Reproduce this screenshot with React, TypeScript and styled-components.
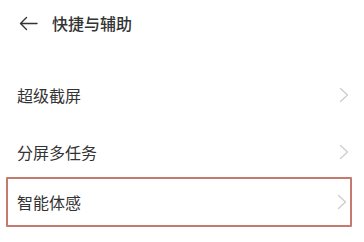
import React from 'react';
import styled, {createGlobalStyle} from "styled-components";

const GlobalStyle = createGlobalStyle`
  html, body {
    margin: 0;
    padding: 0;
    background: #ffffff;
  }
  body {
    font-family: "Noto Sans CJK SC", "Noto Sans", sans-serif;
    color: #333333;
  }
`

type ItemPropsType = {
    title: string
    active?: boolean
}

const Chevron = () => (
    <svg width="10" height="16" viewBox="0 0 10 16" fill="none">
        <path d="M1.5 1.5 L8.5 8 L1.5 14.5" stroke="#cdcdcd" strokeWidth="1.3" strokeLinecap="round" strokeLinejoin="round"/>
    </svg>
)

const Item = (props: ItemPropsType) => {
    return (
        <StyledItem $active={props.active}>
            <ItemText>{props.title}</ItemText>
            <Chevron/>
        </StyledItem>
    );
};

export default function App() {
    return (
        <Page>
            <GlobalStyle/>
            <Header>
                <svg width="19" height="15" viewBox="0 0 19 15" fill="none">
                    <path d="M18 7.5 H1.5 M7.5 1.5 L1.5 7.5 L7.5 13.5" stroke="#333" strokeWidth="1.4" strokeLinecap="round" strokeLinejoin="round"/>
                </svg>
                <Title>快捷与辅助</Title>
            </Header>
            <List>
                <Item title={"超级截屏"}/>
                <Item title={"分屏多任务"}/>
                <Item title={"智能体感"} active/>
            </List>
        </Page>
    );
}

const Page = styled.div`
  width: 364px;
  height: 242px;
  background: #ffffff;
  overflow: hidden;
`
const Header = styled.div`
  height: 46px;
  display: flex;
  align-items: center;
  gap: 14px;
  padding-left: 19px;
`
const Title = styled.h1`
  margin: 0;
  font-size: 16px;
  font-weight: 500;
  color: #333333;
`
const List = styled.div`
  display: flex;
  flex-direction: column;
  padding-top: 20px;
`
const StyledItem = styled.div<{ $active?: boolean }>`
  display: flex;
  align-items: center;
  justify-content: space-between;
  box-sizing: border-box;
  height: ${p => p.$active ? "50px" : "57px"};
  padding: ${p => p.$active ? "0 3px 0 9px" : "0 15px 0 17px"};
  margin: ${p => p.$active ? "-3px 12px 0 6px" : "0"};
  border: ${p => p.$active ? "2px solid #c47a6f" : "none"};
  border-radius: 1px;
`
const ItemText = styled.span`
  font-size: 16px;
  color: #333333;
`
